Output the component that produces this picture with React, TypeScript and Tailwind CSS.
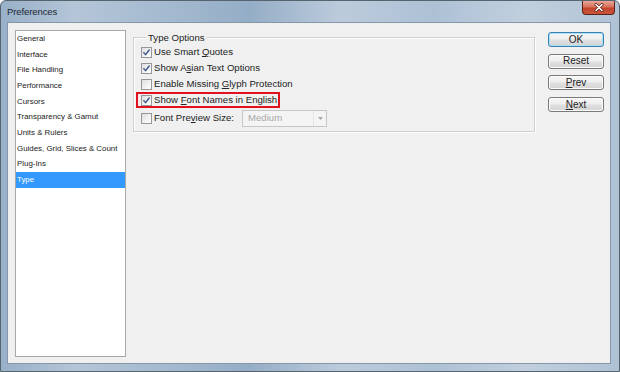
import React from "react";

const FONT = { fontFamily: '"Liberation Sans", Arial, sans-serif' };

function CheckBox({ checked }: { checked: boolean }) {
  return (
    <span className="w-[11px] h-[11px] shrink-0 border border-[#979797] bg-[linear-gradient(135deg,#dedede_0%,#f3f3f3_60%,#ffffff_100%)] flex items-center justify-center">
      {checked && (
        <svg width="9" height="9" viewBox="0 0 9 9">
          <path d="M1.8 4.7 L3.6 6.6 L7.2 2" fill="none" stroke="#3f5f94" strokeWidth="1.5" strokeLinecap="round" strokeLinejoin="round" />
        </svg>
      )}
    </span>
  );
}

function Row({ checked, children }: { checked: boolean; children: React.ReactNode }) {
  return (
    <div className="h-[16px] flex items-center gap-[2px]">
      <CheckBox checked={checked} />
      <span className="leading-none whitespace-nowrap">{children}</span>
    </div>
  );
}

function Btn({ children, def }: { children: React.ReactNode; def?: boolean }) {
  return (
    <div
      className={
        "h-[15px] w-[56px] rounded-[3px] border flex items-center justify-center text-[10px] leading-none text-[#222] bg-[linear-gradient(180deg,#f7f7f7_0%,#ededed_48%,#e0e0e0_52%,#d4d4d4_100%)] " +
        (def ? "border-[#3c7fb1] shadow-[inset_0_0_0_1px_#a6e2f7]" : "border-[#7a7a7a] shadow-[inset_0_0_0_1px_#fbfbfb]")
      }
    >
      {children}
    </div>
  );
}

export default function App() {
  const items = [
    "General",
    "Interface",
    "File Handling",
    "Performance",
    "Cursors",
    "Transparency & Gamut",
    "Units & Rulers",
    "Guides, Grid, Slices & Count",
    "Plug-Ins",
    "Type",
  ];
  return (
    <div
      style={FONT}
      className="w-[620px] h-[372px] flex flex-col border border-[#56646f] rounded-t-[6px] overflow-hidden bg-[linear-gradient(90deg,#98b0c8_0%,#b4c5d7_12%,#a3b9cf_28%,#94adc6_40%,#bccbdc_55%,#adc1d5_70%,#c1cfde_85%,#afc2d5_100%)]"
    >
      <div className="h-[21px] flex items-start shrink-0">
        <span className="ml-[6px] mt-[6px] text-[9.5px] leading-none text-[#1b2632] tracking-[-0.1px]">Preferences</span>
        <div className="ml-auto mr-[4px] w-[33px] h-[14px] rounded-b-[4px] border border-t-0 border-[#5b2318] bg-[linear-gradient(180deg,#e9a797_0%,#d7735e_45%,#c2432b_55%,#c9553e_100%)] flex items-center justify-center">
          <svg width="10" height="9" viewBox="0 0 10 9">
            <path d="M2 1.5 L8 7.5 M8 1.5 L2 7.5" stroke="#5b1e14" strokeWidth="3" strokeLinecap="round" />
            <path d="M2 1.5 L8 7.5 M8 1.5 L2 7.5" stroke="#ffffff" strokeWidth="1.6" strokeLinecap="round" />
          </svg>
        </div>
      </div>
      <div className="ml-[6px] mr-[8px] mb-[7px] flex-1 bg-[#f0f0f0] border border-[#8596a8] flex pt-[7px] pl-[7px] pr-[6px] pb-[6px]">
        {/* list */}
        <div className="w-[111px] shrink-0 border border-[#a8a8a8] bg-white flex flex-col text-[7.9px] text-[#222]">
          {items.map((it) => (
            <div
              key={it}
              className={
                "h-[15.7px] flex items-center pl-[1px] leading-none whitespace-nowrap " +
                (it === "Type" ? "bg-[#3399ff] text-white" : "")
              }
            >
              {it}
            </div>
          ))}
        </div>
        {/* group */}
        <div className="ml-[7px] mt-[7px] w-[402px] h-[95px] shrink-0 relative border border-[#cfcfcf] shadow-[inset_1px_1px_0_#ffffff,1px_1px_0_#ffffff] pt-[6px] pl-[7px] text-[9.6px] text-[#222]">
          <span className="absolute -top-[6px] left-[12px] px-[2px] bg-[#f0f0f0] leading-[12px]">Type Options</span>
          <Row checked>
            Use Smart <u className="underline-offset-1">Q</u>uotes
          </Row>
          <Row checked>
            Show A<u className="underline-offset-1">s</u>ian Text Options
          </Row>
          <Row checked={false}>
            Enable Missing <u className="underline-offset-1">G</u>lyph Protection
          </Row>
          <div className="h-[16px] -ml-[5px] w-fit border-2 border-[#e3101e] pl-[3px] pr-[1px] flex items-center gap-[2px]">
            <CheckBox checked />
            <span className="leading-none whitespace-nowrap">
              Show <u className="underline-offset-1">F</u>ont Names in English
            </span>
          </div>
          <div className="h-[18px] mt-[1px] flex items-center gap-[2px]">
            <CheckBox checked={false} />
            <span className="w-[86px] leading-none whitespace-nowrap">
              Font Pre<u className="underline-offset-1">v</u>iew Size:
            </span>
            <div className="w-[85px] h-[17px] border border-[#c4c7ca] bg-[#f4f4f4] flex items-center">
              <span className="flex-1 pl-[5px] text-[#a8a8a8] leading-none">Medium</span>
              <div className="w-[13px] h-full border-l border-[#e4e4e4] flex items-center justify-center">
                <svg width="5" height="3" viewBox="0 0 5 3">
                  <path d="M0 0 L5 0 L2.5 3 Z" fill="#a9a9a9" />
                </svg>
              </div>
            </div>
          </div>
        </div>
        {/* buttons */}
        <div className="ml-[13px] mt-[2px] flex flex-col gap-[6.7px]">
          <Btn def>OK</Btn>
          <Btn>Reset</Btn>
          <Btn>
            <u className="underline-offset-1">P</u>rev
          </Btn>
          <Btn>
            <u className="underline-offset-1">N</u>ext
          </Btn>
        </div>
      </div>
    </div>
  );
}
